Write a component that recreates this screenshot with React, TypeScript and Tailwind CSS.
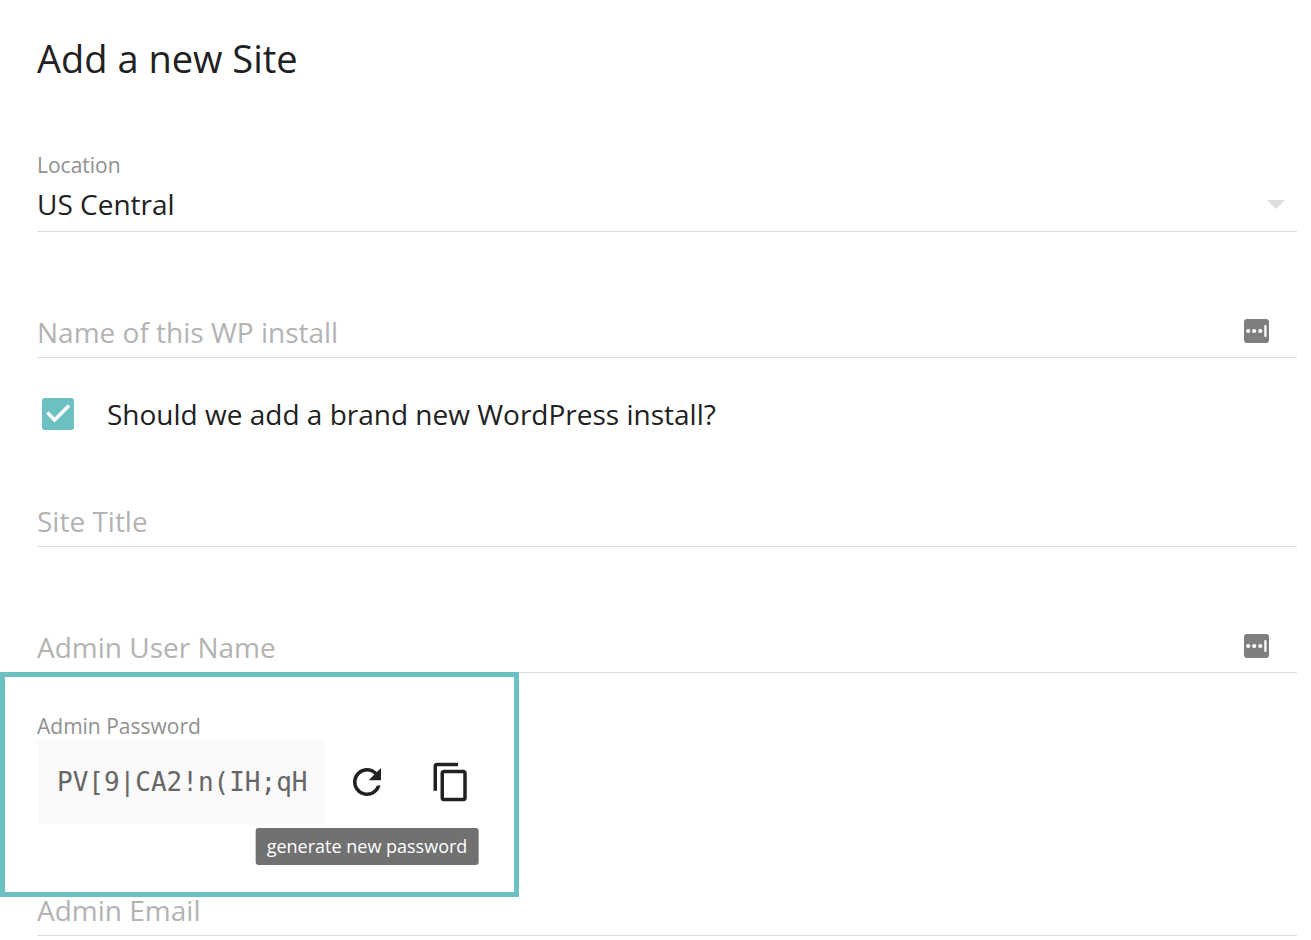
import { useState } from 'react';

interface TextFieldProps {
  id: string;
  label: string;
  hasAutofill?: boolean;
}

const CHARSET = 'ABCDEFGHJKLMNPQRSTUVWXYZabcdefghijkmnopqrstuvwxyz23456789!()[];|';

function createPassword(length = 16) {
  return Array.from({ length }, () => CHARSET[Math.floor(Math.random() * CHARSET.length)]).join('');
}

// Password manager badge shown inside a field
function AutofillBadge() {
  return (
    <svg className="w-[25px] h-6" viewBox="0 0 25 24" aria-hidden="true">
      <rect width="25" height="24" rx="3" fill="#7f7f7f" />
      <circle cx="4.2" cy="12" r="2.1" fill="#fff" />
      <circle cx="10.2" cy="12" r="2.1" fill="#fff" />
      <circle cx="16.3" cy="12" r="2.1" fill="#fff" />
      <rect x="20.3" y="6" width="2.2" height="12" rx="1" fill="#fff" />
    </svg>
  );
}

function TextField({ id, label, hasAutofill = false }: TextFieldProps) {
  return (
    <div className="relative ml-[37px] mr-[14px]">
      <input
        id={id}
        type="text"
        aria-label={label}
        placeholder={label}
        className="block w-full h-[46px] pb-[5px] border-b border-[#dddddd] bg-transparent text-[28px] leading-[40px] text-[#212121] placeholder:text-[#b3b3b3] outline-none"
      />
      {hasAutofill && (
        <span className="absolute right-7 top-[7px]">
          <AutofillBadge />
        </span>
      )}
    </div>
  );
}

export default function App() {
  const [location, setLocation] = useState('US Central');
  const [newInstall, setNewInstall] = useState(true);
  const [password, setPassword] = useState('PV[9|CA2!n(IH;qH');

  return (
    <form className="min-h-screen bg-white pt-[30px] font-['Open_Sans',sans-serif] text-[#212121]">
      <h1 className="ml-[37px] text-[38px] leading-[56px]">Add a new Site</h1>

      {/* Location */}
      <div className="ml-[37px] mr-[14px] mt-[65px]">
        <label htmlFor="location" className="block text-[21px] leading-7 text-[#909090]">Location</label>
        <div className="relative mt-[5px]">
          <select
            id="location"
            value={location}
            onChange={(e) => setLocation(e.target.value)}
            className="block w-full h-12 pb-[7px] appearance-none border-b border-[#dddddd] bg-transparent text-[28px] leading-[40px] outline-none"
          >
            <option>US Central</option>
            <option>US East</option>
            <option>US West</option>
          </select>
          <svg className="absolute right-3 top-4 w-[18px] h-[9px] pointer-events-none" viewBox="0 0 18 9" aria-hidden="true">
            <path d="M0 0h18L9 9z" fill="#dedede" />
          </svg>
        </div>
      </div>

      <div className="mt-20">
        <TextField id="install-name" label="Name of this WP install" hasAutofill />
      </div>

      {/* New install toggle */}
      <div className="ml-[42px] mt-10 flex h-8 items-center">
        <div className="relative h-8 w-8">
          <input
            id="new-install"
            type="checkbox"
            checked={newInstall}
            onChange={(e) => setNewInstall(e.target.checked)}
            className="block h-8 w-8 appearance-none rounded-[3px] border-2 border-[#6bc0c1] checked:bg-[#6bc0c1]"
          />
          {newInstall && (
            <svg className="absolute inset-0 pointer-events-none" viewBox="0 0 32 32" fill="none" stroke="#fff" strokeWidth="3.6" aria-hidden="true">
              <path d="M5.2 14.6 12.6 22 27 7.6" />
            </svg>
          )}
        </div>
        <label htmlFor="new-install" className="ml-[33px] text-[28px] leading-[38px]">
          Should we add a brand new WordPress install?
        </label>
      </div>

      <div className="mt-[71px] flex flex-col gap-20">
        <TextField id="site-title" label="Site Title" />
        <TextField id="admin-user" label="Admin User Name" hasAutofill />
      </div>

      {/* Admin password */}
      <div className="relative z-10 -mt-px w-fit border-[5px] border-[#6bc0c1] pb-[68px] pl-8 pr-[21px] pt-[35px]">
        <label htmlFor="admin-password" className="block text-[21px] leading-7 text-[#909090]">Admin Password</label>
        <div className="flex">
          <input
            id="admin-password"
            type="text"
            readOnly
            value={password}
            className="h-[84px] w-72 bg-[#fafafa] pl-5 pr-3 font-['DejaVu_Sans_Mono',monospace] text-[26px] text-[#666666] outline-none"
          />
          <div className="relative">
            <button
              type="button"
              aria-describedby="refresh-tip"
              aria-label="generate new password"
              onClick={() => setPassword(createPassword())}
              className="flex h-[84px] w-[84px] items-center justify-center"
            >
              <svg className="h-[42px] w-[42px]" viewBox="0 0 24 24" fill="currentColor" aria-hidden="true">
                <path d="M17.65 6.35C16.2 4.9 14.21 4 12 4a8 8 0 1 0 7.73 10h-2.08A6 6 0 1 1 12 6c1.66 0 3.14.69 4.22 1.78L13 11h7V4l-2.35 2.35z" />
              </svg>
            </button>
            <span
              id="refresh-tip"
              role="tooltip"
              className="absolute left-1/2 top-full mt-1 -translate-x-1/2 whitespace-nowrap rounded-[3px] bg-[#717171] px-[11px] text-[18px] leading-[37px] text-white"
            >
              generate new password
            </span>
          </div>
          <button
            type="button"
            aria-label="copy password"
            onClick={() => navigator.clipboard?.writeText(password)}
            className="flex h-[84px] w-[84px] items-center justify-center"
          >
            <svg className="h-[42px] w-[42px]" viewBox="0 0 24 24" fill="currentColor" aria-hidden="true">
              <path d="M19 21H8V7h11m0-2H8a2 2 0 0 0-2 2v14a2 2 0 0 0 2 2h11a2 2 0 0 0 2-2V7a2 2 0 0 0-2-2m-3-4H4a2 2 0 0 0-2 2v14h2V3h12V1z" />
            </svg>
          </button>
        </div>
      </div>

      <div className="-mt-[7px]">
        <TextField id="admin-email" label="Admin Email" />
      </div>
    </form>
  );
}
